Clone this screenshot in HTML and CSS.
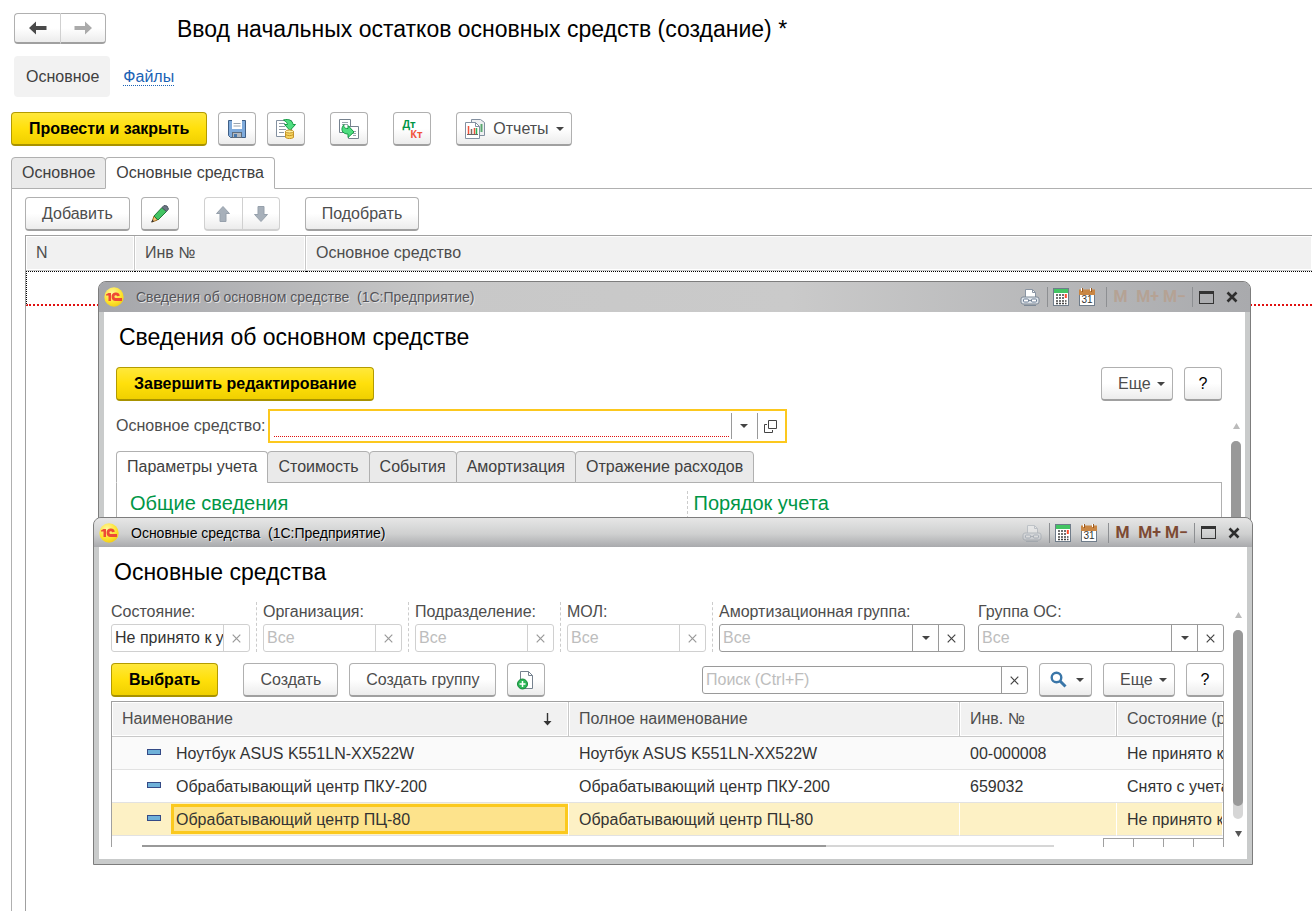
FILE: index.html
```html
<!DOCTYPE html>
<html lang="ru">
<head>
<meta charset="utf-8">
<title>Ввод начальных остатков основных средств</title>
<link rel="stylesheet" href="styles.css">
</head>
<body>
<svg class="defs" aria-hidden="true">
  <symbol id="i-printer" viewBox="0 0 20 18">
    <path d="M5.500 9.500V1.500h7l3 3v5z" fill="#fff" stroke="#8a95a3"/><path d="M12.500 1.500v3h3" fill="none" stroke="#8a95a3"/>
    <rect x="1" y="9" width="18" height="7" rx="2" fill="#dfe4ea" stroke="#7d8997"/>
    <rect x="3.500" y="11" width="5" height="3" rx="1" fill="#fff" stroke="#6d7f96"/><rect x="11.500" y="11" width="5" height="3" rx="1" fill="#fff" stroke="#6d7f96"/>
    <path d="M4 17.500h12M8.500 12.500h3" stroke="#7d8997"/>
  </symbol>
  <symbol id="i-calc" viewBox="0 0 16 18">
    <rect x=".5" y=".5" width="15" height="17" fill="#fff" stroke="#6f7c8a"/><rect x="1" y="1" width="14" height="4" fill="#43c463"/>
    <path d="M3 7h2M6 7h2M9 7h2M3 10h2M6 10h2M9 10h2M3 13h2M6 13h2M9 13h2M3 15.500h2M6 15.500h2M9 15.500h2M12 13h1.500M12 15.500h1.500" stroke="#444" stroke-width="1.600"/>
    <rect x="11.800" y="6" width="2" height="4" fill="#ff4a2a"/>
  </symbol>
  <symbol id="i-cal" viewBox="0 0 16 18">
    <rect x=".5" y="2.500" width="15" height="15" fill="#fff" stroke="#6f7c8a"/><rect x="0" y="1.500" width="16" height="5.500" fill="#c98643"/>
    <path d="M3.500 0v4M12.500 0v4" stroke="#9a5a22"/><path d="M2.500 0v3M11.500 0v3" stroke="#fff"/>
  </symbol>
  <symbol id="i-max" viewBox="0 0 15 13"><rect x=".5" y=".5" width="14" height="12" fill="none" stroke="#333"/><path d="M0 1.500h15" stroke="#333" stroke-width="3"/></symbol>
  <symbol id="i-close" viewBox="0 0 12 12"><path d="M1.500 1.500l9 9M10.500 1.500l-9 9" stroke="#2e2e2e" stroke-width="2.600"/></symbol>
  <symbol id="i-logo" viewBox="0 0 20 20">
    <radialGradient id="lg" cx=".4" cy=".3" r=".7"><stop offset="0" stop-color="#fff7a0"/><stop offset=".7" stop-color="#fde22c"/><stop offset="1" stop-color="#f3cf1a"/></radialGradient>
    <circle cx="10" cy="10" r="9.700" fill="url(#lg)"/>
    <path d="M2 7.500l2.500-1.500h2.500v8H4.500V8.500H2z" fill="#ee4a35"/>
    <path d="M14.500 9a2.800 2.800 0 1 0-2.800 3.500H18" fill="none" stroke="#ee4a35" stroke-width="2.800"/>
  </symbol>
  <symbol id="i-down" viewBox="0 0 8 4"><path d="M0 0h8L4 4z" fill="#444"/></symbol>
  <symbol id="i-x" viewBox="0 0 9 9"><path d="M.7.700l7.600 7.600M8.300.700L.7 8.300" stroke="currentColor" stroke-width="1.200"/></symbol>
</svg>

<main class="page">
  <header class="head">
    <div class="pair nav">
      <button class="btn" aria-label="Назад"><svg width="18" height="14" viewBox="0 0 18 14"><path d="M0 7l7-6.500v4.500h10.500v4H7v4.500z" fill="#4a4a4a"/></svg></button>
      <button class="btn" aria-label="Вперед"><svg width="18" height="14" viewBox="0 0 18 14"><path d="M18 7l-7-6.500v4.500H.5v4H11v4.500z" fill="#aaa"/></svg></button>
    </div>
    <h1>Ввод начальных остатков основных средств (создание) *</h1>
  </header>
  <nav class="links"><span class="current">Основное</span><a href="#">Файлы</a></nav>
  <div class="bar main-bar">
    <button class="btn primary">Провести и закрыть</button>
    <button class="btn icon" aria-label="Записать"><svg width="20" height="20" viewBox="0 0 20 20"><path d="M1.500 1.500h17v17h-15l-2-2z" fill="#7fabdc" stroke="#3f5f86"/><rect x="5" y="1" width="10" height="9" fill="#fff"/><path d="M6.500 4.500h7M6.500 7h7" stroke="#9aa4ae"/><rect x="5.500" y="13.500" width="9" height="5" fill="#b4b9bf" stroke="#5d6c7d"/><rect x="7" y="15" width="3" height="3" fill="#4878ad"/></svg></button>
    <button class="btn icon" aria-label="Провести"><svg width="20" height="20" viewBox="0 0 20 20"><path d="M.5 1.500h15v16H.5z" fill="#fff" stroke="#8390a0"/><path d="M3 4.500h6M3 7.500h6M3 10.500h7M3 13.500h5" stroke="#8d98a5"/><path d="M7.500 1c5.500-1.500 9 .5 9.500 4.500h2.500L14 11.500 8.500 5.500h3c0-1.500-1.500-3-4-4.500z" fill="#4fdd80" stroke="#159a45"/><path d="M9.500 12.500v6c2 1.500 6 1.500 8 0v-6z" fill="#f7d560" stroke="#c49428"/><ellipse cx="13.500" cy="12.500" rx="4" ry="1.500" fill="#fff0a0" stroke="#c49428"/><path d="M9.500 15.500c2 1.500 6 1.500 8 0" fill="none" stroke="#c49428"/></svg></button>
    <button class="btn icon gap" aria-label="Создать на основании"><svg width="20" height="20" viewBox="0 0 20 20"><path d="M.5.500h11v13H.5z" fill="#fff" stroke="#76828f"/><path d="M3 3.500h6M3 5.500h6" stroke="#9aa4ae"/><path d="M9.500 7.500h10v12h-10z" fill="#fff" stroke="#76828f"/><path d="M14 12.500h3M14 14.500h3M14 16.500h3" stroke="#9aa4ae"/><path d="M5 5.500c-.5 3 .5 4 4 4V6.500l6 6.500-6 5.500v-3.500c-6 0-8-5-4-9.500z" fill="#4fdd80" stroke="#159a45"/></svg></button>
    <button class="btn icon gap dtkt" aria-label="Дт Кт"><span class="dt">Дт</span><span class="kt">Кт</span></button>
    <button class="btn gap reports"><svg width="20" height="20" viewBox="0 0 20 20"><path d="M6.500.500h9l4 3v13h-13z" fill="#eef0f2" stroke="#8390a0"/><path d="M16.500 5v8" stroke="#5aa870" stroke-width="2"/><path d="M.5 3.500h10l4 4v12H.5z" fill="#fff" stroke="#8390a0"/><path d="M10.500 3.500v4h4" fill="none" stroke="#8390a0"/><path d="M3.500 7v8M9.500 9v6" stroke="#f0523a" stroke-width="1.500"/><path d="M6.500 10v5" stroke="#7d6b62" stroke-width="1.500"/><path d="M11.500 9v6" stroke="#2eb457" stroke-width="1.500"/><path d="M2 15.500h11" stroke="#666"/></svg><span>Отчеты</span><svg class="down"><use href="#i-down"/></svg></button>
  </div>
  <div class="tabs" role="tablist"><button class="tab" role="tab">Основное</button><button class="tab active" role="tab">Основные средства</button></div>
  <section class="panel">
    <div class="bar">
      <button class="btn">Добавить</button>
      <button class="btn icon" aria-label="Изменить"><svg width="18" height="18" viewBox="0 0 18 18"><path d="M1 17l2-6 3.500 4z" fill="#f3c37a" stroke="#9c6a20"/><path d="M0 17.500l3-1-1.500-2z" fill="#333"/><path d="M3 11l8-8.500 4.500 4L7 15z" fill="#43c463" stroke="#237a3a"/><path d="M11 2.500l2-2 3 .5 1.500 3-2 2.500z" fill="#6b7684" stroke="#4c5560"/></svg></button>
      <div class="pair gap disabled">
        <button class="btn" disabled aria-label="Вверх"><svg width="14" height="16" viewBox="0 0 14 16"><path d="M7 .5L13.500 7.500H10v8H4v-8H.5z" fill="#a7b0ba" stroke="#97a1ac"/></svg></button>
        <button class="btn" disabled aria-label="Вниз"><svg width="14" height="16" viewBox="0 0 14 16"><path d="M7 15.500L.5 8.500H4v-8h6v8h3.500z" fill="#a7b0ba" stroke="#97a1ac"/></svg></button>
      </div>
      <button class="btn gap">Подобрать</button>
    </div>
    <div class="sheet">
      <table>
        <colgroup><col class="c-n"><col class="c-inv"><col></colgroup>
        <thead><tr><th>N</th><th>Инв №</th><th>Основное средство</th></tr></thead>
        <tbody><tr><td></td><td></td><td></td></tr></tbody>
      </table>
    </div>
  </section>
</main>

<section class="window back">
  <header class="caption">
    <svg class="logo"><use href="#i-logo"/></svg>
    <span class="name">Сведения об основном средстве&nbsp; (1С:Предприятие)</span>
    <div class="tools"><button class="wide" aria-label="Печать"><svg width="20" height="18"><use href="#i-printer"/></svg></button></div>
    <div class="tools"><button aria-label="Калькулятор"><svg width="16" height="18"><use href="#i-calc"/></svg></button><button aria-label="Календарь"><svg width="16" height="18"><use href="#i-cal"/><text class="day" x="8" y="15" text-anchor="middle">31</text></svg></button></div>
    <div class="tools memory"><button>M</button><button>M+</button><button>M−</button></div>
    <div class="tools"><button aria-label="Развернуть"><svg width="15" height="13"><use href="#i-max"/></svg></button><button aria-label="Закрыть"><svg width="12" height="12"><use href="#i-close"/></svg></button></div>
  </header>
  <div class="body">
    <div class="content">
      <h2>Сведения об основном средстве</h2>
      <div class="bar">
        <button class="btn primary">Завершить редактирование</button>
        <button class="btn more push">Еще<svg class="down"><use href="#i-down"/></svg></button>
        <button class="btn icon help">?</button>
      </div>
      <div class="asset">
        <label for="asset">Основное средство:</label>
        <div class="field focus"><input id="asset" type="text"><button aria-label="Выбрать из списка"><svg class="down"><use href="#i-down"/></svg></button><button aria-label="Открыть"><svg width="13" height="13" viewBox="0 0 13 13"><path d="M4.500.500h8v8h-8zM3 4.500H.5v8h8V10" fill="none" stroke="#444"/></svg></button></div>
      </div>
      <div class="tabs" role="tablist"><button class="tab active" role="tab">Параметры учета</button><button class="tab" role="tab">Стоимость</button><button class="tab" role="tab">События</button><button class="tab" role="tab">Амортизация</button><button class="tab" role="tab">Отражение расходов</button></div>
      <div class="groups"><h3>Общие сведения</h3><h3>Порядок учета</h3></div>
    </div>
    <div class="scroll"><svg width="7" height="6" viewBox="0 0 7 6"><path d="M3.500 0L7 6H0z" fill="#bbb"/></svg><i class="track"><i class="thumb all"></i></i></div>
  </div>
</section>

<section class="window front">
  <header class="caption">
    <svg class="logo"><use href="#i-logo"/></svg>
    <span class="name">Основные средства&nbsp; (1С:Предприятие)</span>
    <div class="tools"><button class="wide off" disabled aria-label="Печать"><svg width="20" height="18"><use href="#i-printer"/></svg></button></div>
    <div class="tools"><button aria-label="Калькулятор"><svg width="16" height="18"><use href="#i-calc"/></svg></button><button aria-label="Календарь"><svg width="16" height="18"><use href="#i-cal"/><text class="day" x="8" y="15" text-anchor="middle">31</text></svg></button></div>
    <div class="tools memory"><button>M</button><button>M+</button><button>M−</button></div>
    <div class="tools"><button aria-label="Развернуть"><svg width="15" height="13"><use href="#i-max"/></svg></button><button aria-label="Закрыть"><svg width="12" height="12"><use href="#i-close"/></svg></button></div>
  </header>
  <div class="body">
    <div class="content">
      <h2>Основные средства</h2>
      <div class="filters">
        <div class="filter"><label for="f1">Состояние:</label><div class="field dim"><input id="f1" type="text" value="Не принято к учету"><button aria-label="Очистить"><svg class="x"><use href="#i-x"/></svg></button></div></div>
        <div class="filter"><label for="f2">Организация:</label><div class="field dim"><input id="f2" type="text" placeholder="Все"><button aria-label="Очистить"><svg class="x"><use href="#i-x"/></svg></button></div></div>
        <div class="filter"><label for="f3">Подразделение:</label><div class="field dim"><input id="f3" type="text" placeholder="Все"><button aria-label="Очистить"><svg class="x"><use href="#i-x"/></svg></button></div></div>
        <div class="filter"><label for="f4">МОЛ:</label><div class="field dim"><input id="f4" type="text" placeholder="Все"><button aria-label="Очистить"><svg class="x"><use href="#i-x"/></svg></button></div></div>
        <div class="filter"><label for="f5">Амортизационная группа:</label><div class="field"><input id="f5" type="text" placeholder="Все"><button aria-label="Выбрать из списка"><svg class="down"><use href="#i-down"/></svg></button><button aria-label="Очистить"><svg class="x"><use href="#i-x"/></svg></button></div></div>
        <div class="filter"><label for="f6">Группа ОС:</label><div class="field"><input id="f6" type="text" placeholder="Все"><button aria-label="Выбрать из списка"><svg class="down"><use href="#i-down"/></svg></button><button aria-label="Очистить"><svg class="x"><use href="#i-x"/></svg></button></div></div>
      </div>
      <div class="bar">
        <button class="btn primary">Выбрать</button>
        <button class="btn gap">Создать</button>
        <button class="btn">Создать группу</button>
        <button class="btn icon" aria-label="Создать копированием"><svg width="18" height="20" viewBox="0 0 18 20"><path d="M3.500 1.500h8l4 4v13h-12z" fill="#fff" stroke="#76828f"/><path d="M11.500 1.500v4h4" fill="none" stroke="#76828f"/><circle cx="5.500" cy="14" r="5" fill="#2db757" stroke="#16893a"/><path d="M2.500 14h6M5.500 11v6" stroke="#fff" stroke-width="1.500"/></svg></button>
        <div class="field search push"><input type="text" placeholder="Поиск (Ctrl+F)" aria-label="Поиск"><button aria-label="Очистить"><svg class="x"><use href="#i-x"/></svg></button></div>
        <button class="btn find" aria-label="Найти"><svg width="17" height="17" viewBox="0 0 17 17"><circle cx="6.500" cy="6.500" r="4.800" fill="none" stroke="#3a76a8" stroke-width="2.400"/><path d="M10 10l5.500 5.500" stroke="#3a76a8" stroke-width="3"/></svg><svg class="down"><use href="#i-down"/></svg></button>
        <button class="btn more">Еще<svg class="down"><use href="#i-down"/></svg></button>
        <button class="btn icon help">?</button>
      </div>
      <div class="list">
        <table>
          <colgroup><col class="c-name"><col class="c-full"><col class="c-code"><col></colgroup>
          <thead><tr><th><span class="sort">Наименование<svg width="9" height="13" viewBox="0 0 9 13"><path d="M4.500 0v10" stroke="#333" stroke-width="1.400"/><path d="M.5 8h8l-4 4.500z" fill="#333"/></svg></span></th><th>Полное наименование</th><th>Инв. №</th><th>Состояние (р</th></tr></thead>
          <tbody>
            <tr><td><span class="item"><i></i><b>Ноутбук ASUS K551LN-XX522W</b></span></td><td>Ноутбук ASUS K551LN-XX522W</td><td>00-000008</td><td>Не принято к</td></tr>
            <tr><td><span class="item"><i></i><b>Обрабатывающий центр ПКУ-200</b></span></td><td>Обрабатывающий центр ПКУ-200</td><td>659032</td><td>Снято с учета</td></tr>
            <tr class="selected"><td><span class="item"><i></i><b>Обрабатывающий центр ПЦ-80</b></span></td><td>Обрабатывающий центр ПЦ-80</td><td></td><td>Не принято к</td></tr>
          </tbody>
        </table>
        <div class="foot"><i class="hscroll"><i></i></i><div class="pager"><i></i><i></i><i></i><i></i></div></div>
      </div>
    </div>
    <div class="scroll"><svg width="7" height="6" viewBox="0 0 7 6"><path d="M3.500 0L7 6H0z" fill="#bbb"/></svg><i class="track"><i class="thumb"></i></i><svg width="7" height="6" viewBox="0 0 7 6"><path d="M3.500 6L7 0H0z" fill="#555"/></svg></div>
  </div>
</section>
</body>
</html>
```

FILE: styles.css
```css
* { box-sizing: border-box; }
body { margin: 0; background: #fff; color: #4d4d4d; font: 16px/20px "Liberation Sans", Arial, sans-serif; overflow: hidden; }
button, input { font: inherit; color: inherit; margin: 0; padding: 0; }
h1, h2, h3 { margin: 0; font-weight: 400; color: #000; white-space: nowrap; }
h1 { font-size: 23px; line-height: 28px; }
h2 { font-size: 23px; line-height: 28px; }
h3 { font-size: 20px; line-height: 24px; color: #009646; }
table { border-collapse: separate; border-spacing: 0; table-layout: fixed; width: 100%; }
th { font-weight: 400; text-align: left; }
th, td { padding: 0 0 0 10px; white-space: nowrap; overflow: hidden; }
svg { flex: none; display: block; }
.defs { position: absolute; width: 0; height: 0; }

.btn { height: 34px; padding: 0 16px; display: flex; align-items: center; justify-content: center; white-space: nowrap; border: 1px solid #b0b0b0; border-bottom: 2px solid #a0a0a0; border-radius: 4px; background: linear-gradient(#fff 50%, #ececec); }
.btn.primary { padding: 0 17px; color: #000; font-weight: 700; border-color: #b39b00; border-bottom: 2px solid #a89200; background: linear-gradient(#ffe83b, #ffe00b 50%, #f0d000); }
.btn.icon { width: 38px; padding: 0; }
.btn.help { color: #000; }
.btn.more { width: 72px; padding: 0 7px 0 16px; justify-content: space-between; }
.btn.find { width: 53px; padding: 0 7px 0 10px; justify-content: space-between; }
.btn.reports { width: 116px; padding: 0 7px 0 8px; justify-content: space-between; }
.down { width: 8px; height: 4px; }
.x { width: 9px; height: 9px; }
.bar { display: flex; align-items: center; gap: 11px; }
.gap { margin-left: 14px; }
.push { margin-left: auto; }
.pair { display: flex; }
.pair .btn { width: 38px; padding: 0; }
.pair .btn:first-child { border-radius: 4px 0 0 4px; border-right-width: 0; }
.pair .btn:last-child { border-radius: 0 4px 4px 0; border-left-color: #d0d0d0; }
.pair.disabled .btn { border-color: #d0d0d0; }
.nav .btn { width: 46px; height: 31px; }
.btn.dtkt { flex-direction: column; font: 700 10px/10px "Open Sans", sans-serif; }
.dt { color: #009646; align-self: flex-start; padding-left: 8px; }
.kt { color: #f0523a; align-self: flex-end; padding-right: 8px; }

.page { display: flex; flex-direction: column; height: 100vh; padding: 13px 0 0 11px; }
.head { display: flex; align-items: center; gap: 71px; padding-left: 3px; }
.links { display: flex; align-items: center; gap: 13px; padding: 12px 3px 15px; }
.current { padding: 11px 11px 10px 12px; border-radius: 4px; background: #f2f2f2; color: #404040; }
.links a { color: #1a63b5; text-decoration: none; border-bottom: 1px dotted #1a63b5; line-height: 17px; }
.main-bar { padding-bottom: 11px; }
.tabs { display: flex; position: relative; }
.tab { height: 32px; padding: 0 10px; margin-right: -1px; border: 1px solid #b0b0b0; border-radius: 4px 4px 0 0; background: #eaeaea; color: #404040; white-space: nowrap; }
.tab.active { background: #fff; border-bottom-color: #fff; }
.panel { flex: 1; display: flex; flex-direction: column; gap: 4px; margin-top: -1px; padding: 8px 0 0 13px; border: solid #b0b0b0; border-width: 1px 0 0 1px; }
.sheet { flex: 1; border: solid #a0a0a0; border-width: 1px 0 0 1px; }
.c-n { width: 109px; }
.c-inv { width: 171px; }
th { height: 35px; background: #f1f1f1; border-right: 1px solid #c8c8c8; border-bottom: 1px solid #c8c8c8; box-shadow: inset 0 0 0 1px #fff; }
th:last-child { border-right: 0; }
.sheet td { height: 35px; border-top: 1px dotted #000; border-bottom: 2px dotted #e01010; }
.sheet td:first-child { border-left: 1px dotted #000; }

.window { position: absolute; display: flex; flex-direction: column; border: 1px solid #7d7d7d; border-radius: 8px 8px 0 0; background: #c9cbcb; }
.back { top: 281px; left: 98px; right: 61px; height: 400px; }
.front { top: 517px; left: 93px; right: 59px; }
.caption { display: flex; align-items: center; height: 30px; padding: 0 5px; font-size: 14px; line-height: 16px; border-radius: 7px 7px 0 0; }
.back .caption { background: linear-gradient(90deg, #a5a6aa, #c8c8c8 30%, #cacaca 60%, #a9aaad); color: #55555a; }
.front .caption { height: 29px; background: linear-gradient(#e6e6e6, #cfd0d0 55%, #a9aaad); color: #000; }
.logo { width: 20px; height: 20px; margin-right: 12px; }
.name { margin-right: auto; white-space: nowrap; text-shadow: 1px 1px 0 #e2e2e2; }
.tools { display: flex; }
.tools + .tools { border-left: 1px solid #8d8f92; }
.tools button { width: 26px; height: 20px; display: flex; align-items: center; justify-content: center; border: 0; background: none; }
.tools .wide { width: 34px; }
.tools:nth-child(4) { padding-right: 6px; }
.day { font: 10px "Liberation Sans", sans-serif; fill: #333; }
.off { opacity: .35; }
.memory { padding-right: 4px; }
.memory button { width: 27px; font: 700 16px/20px Roboto, sans-serif; color: #7d4a33; }
.back .memory button { color: #b5a294; }
.body { flex: 1; display: flex; margin: 0 5px 5px; background: #fff; min-height: 0; }
.content { flex: 1; min-width: 0; }
.back .content { padding: 11px 0 0 12px; display: flex; flex-direction: column; }
.back h2, .front h2 { padding-left: 3px; }
.back .bar { padding: 16px 0 8px; }
.asset { display: flex; align-items: center; gap: 2px; padding-bottom: 8px; }
.field { display: flex; height: 28px; border: 1px solid #9a9a9a; border-radius: 3px; background: #fff; }
.field input { flex: 1; min-width: 0; padding: 0 0 0 3px; border: 0; outline: 0; background: none; color: #333; }
.field input::placeholder { color: #bdbdbd; opacity: 1; }
.field button { width: 26px; display: flex; align-items: center; justify-content: center; border: 0; border-left: 1px solid #9a9a9a; background: none; color: #444; }
.dim, .dim button { border-color: #d0d0d0; }
.dim button { color: #999; }
.focus { width: 519px; height: 34px; padding: 2px; border: 2px solid #fcc81e; border-radius: 0; }
.focus input { margin: 0 2px 2px; border-bottom: 1px dotted #e01010; }
.groups { flex: 1; display: grid; grid-template-columns: 1fr 1fr; margin-top: -1px; padding: 8px 0 0 13px; border: 1px solid #b0b0b0; }
.groups h3 + h3 { margin-left: 11px; padding-left: 6px; border-left: 1px dashed #ccc; }
.scroll { width: 23px; padding-left: 5px; display: flex; flex-direction: column; align-items: center; gap: 12px; }
.back .scroll { padding-top: 111px; }
.track { flex: 1; width: 10px; border-radius: 5px; background: #d6d6d6; }
.thumb { display: block; height: 93%; border-radius: 5px; background: #999; }
.thumb.all { height: 100%; }
.front .content { padding: 11px 0 12px 12px; }
.front .scroll { padding-top: 65px; padding-bottom: 22px; }
.filters { display: grid; grid-template-columns: repeat(4, 139px) 1fr 1fr; gap: 13px; padding: 16px 0 11px; }
.filter { position: relative; display: flex; flex-direction: column; gap: 2px; min-width: 0; white-space: nowrap; }
.filter:nth-child(-n+4)::after { content: ""; position: absolute; top: 0; bottom: 0; right: -7px; border-right: 1px dashed #ccc; }
.search { width: 326px; }
.list { margin-top: 4px; border: solid #a0a0a0; border-width: 1px 1px 0; overflow: hidden; }
.c-name { width: 457px; }
.c-full { width: 391px; }
.c-code { width: 157px; }
.list td { height: 33px; padding-top: 1px; border-bottom: 1px solid #e2e2e2; color: #333; }
.list tbody tr:first-child td { background: #fafafa; }
.list td:first-child { padding: 0; }
.sort { display: flex; align-items: center; justify-content: space-between; padding-right: 16px; }
.item { display: flex; align-items: center; }
.item i { width: 14px; height: 6px; margin: 0 10px 2px 35px; border: 1px solid #344a86; background: #6fb1d9; }
.item b { flex: 1; font-weight: 400; height: 30px; line-height: 25px; padding: 0 2px; border: 3px solid transparent; }
.list .selected td { background: #fdf1c5; border-right: 1px solid #fff; }
.selected b { background: #fde38c; }
.item b { margin-right: 0; }
.list .selected b { border-color: #fbc91e; }
.foot { display: flex; align-items: flex-end; height: 11px; padding-left: 30px; }
.hscroll { flex: 1; height: 2px; background: #d6d6d6; }
.hscroll i { display: block; width: 75%; height: 2px; background: #999; }
.pager { display: flex; margin-left: 49px; border-top: 1px solid #a0a0a0; }
.pager i { width: 30px; height: 8px; border-left: 1px solid #a0a0a0; }
```
